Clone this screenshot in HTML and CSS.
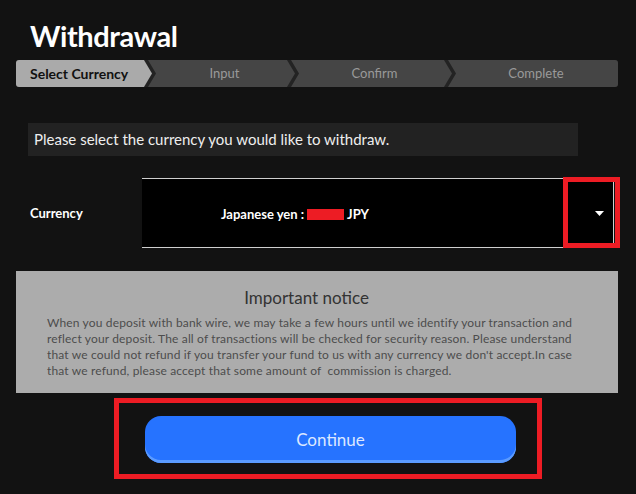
FILE: index.html
```html
<!DOCTYPE html>
<html lang="en">
<head>
  <meta charset="UTF-8">
  <title>Withdrawal</title>
  <link rel="stylesheet" href="styles.css">
</head>
<body>
  <main class="page">
    <h1 class="title">Withdrawal</h1>

    <ol class="steps">
      <li class="step step-active">Select Currency</li>
      <li class="step">Input</li>
      <li class="step">Confirm</li>
      <li class="step step-last">Complete</li>
    </ol>

    <p class="lead">Please select the currency you would like to withdraw.</p>

    <div class="field-row">
      <label class="field-label">Currency</label>
      <div class="select">
        <span class="select-value">Japanese yen : <span class="mask"></span> JPY</span>
        <span class="select-arrow">
          <svg width="9" height="5" viewBox="0 0 9 5"><polygon points="0,0 9,0 4.5,5" fill="#fff"/></svg>
        </span>
        <span class="mark mark-select"></span>
      </div>
    </div>

    <section class="notice">
      <h2 class="notice-title">Important notice</h2>
      <p class="notice-text">When you deposit with bank wire, we may take a few hours until we identify your transaction and<br>reflect your deposit. The all of transactions will be checked for security reason. Please understand<br>that we could not refund if you transfer your fund to us with any currency we don't accept.In case<br>that we refund, please accept that some amount of&nbsp; commission is charged.</p>
    </section>

    <div class="actions">
      <button class="btn-continue">Continue</button>
    </div>
  </main>
</body>
</html>
```

FILE: styles.css
```css
/* Withdrawal - step 1 */
body {
  background-color: #121212;
  color: #fff;
  font-family: "Segoe UI", Lato, sans-serif;
  margin: 0;
  padding: 0;
}

.page {
  width: 602px;
  padding: 0 18px 0 16px;
}

.title {
  margin: 0 0 6px 14px;
  padding-top: 18px;
  font-size: 29px;
  line-height: 36px;
  font-weight: 700;
  letter-spacing: -0.4px;
}

/* steps bar */
.steps {
  display: flex;
  list-style: none;
  margin: 0;
  padding: 0;
  height: 27px;
  background-color: #232323;
  border-radius: 3px;
  overflow: hidden;
}

.step {
  height: 27px;
  line-height: 27px;
  font-size: 13px;
  color: #9a9a9a;
  background-color: #454545;
  text-align: center;
  padding-left: 6px;
  box-sizing: border-box;
  margin-left: -4px;
  clip-path: polygon(0 0, calc(100% - 8px) 0, 100% 50%, calc(100% - 8px) 100%, 0 100%, 8px 50%);
}

.step:nth-child(2) { width: 147px; }
.step:nth-child(3) { width: 161px; }

.step-active {
  width: 136px;
  margin-left: 0;
  padding-left: 14px;
  text-align: left;
  font-size: 14px;
  font-weight: 700;
  color: #111;
  background-color: #aaaaaa;
  clip-path: polygon(0 0, calc(100% - 8px) 0, 100% 50%, calc(100% - 8px) 100%, 0 100%);
}

.step-last {
  flex: 1;
  clip-path: polygon(0 0, 100% 0, 100% 100%, 0 100%, 8px 50%);
}

.lead {
  margin: 36px 0 0 12px;
  width: 550px;
  height: 33px;
  line-height: 33px;
  padding-left: 6px;
  box-sizing: border-box;
  font-size: 15px;
  color: #eee;
  background-color: #222;
}

/* currency select */
.field-row {
  display: flex;
  align-items: center;
  margin-top: 22px;
}

.field-label {
  width: 126px;
  padding-left: 14px;
  box-sizing: border-box;
  font-size: 13px;
  font-weight: 700;
}

.select {
  position: relative;
  display: flex;
  align-items: center;
  width: 472px;
  height: 70px;
  box-sizing: border-box;
  background-color: #000;
  border-top: 1px solid #cfcfcf;
  border-bottom: 1px solid #cfcfcf;
  border-right: 1px solid #cfcfcf;
}

.select-value {
  flex: 1;
  padding-left: 79px;
  padding-top: 2px;
  font-size: 13px;
  font-weight: 700;
}

.mask {
  display: inline-block;
  width: 37px;
  height: 11px;
  background-color: #ed1c24;
  vertical-align: -1px;
}

.select-arrow {
  display: flex;
  width: 18px;
  padding-left: 35px;
  padding-top: 1px;
}

.mark {
  position: absolute;
  border: 5px solid #ed1c24;
  box-sizing: border-box;
}

.mark-select {
  left: 421px;
  top: -2px;
  width: 57px;
  height: 71px;
}

/* notice */
.notice {
  margin-top: 23px;
  height: 122px;
  padding: 17px 38px 0 31px;
  box-sizing: border-box;
  background-color: #acacac;
  color: #444;
}

.notice-title {
  margin: 0 14px 7px 0;
  font-size: 17px;
  line-height: 20px;
  font-weight: 400;
  text-align: center;
  color: #333;
}

.notice-text {
  margin: 0;
  font-size: 12px;
  line-height: 16px;
  letter-spacing: 0.15px;
  white-space: nowrap;
  color: #4d4d4d;
}

/* continue */
.actions {
  margin: 5px 0 0 98px;
  width: 428px;
  box-sizing: border-box;
  border: 5px solid #ed1c24;
  padding: 13px 21px 11px 26px;
}

.btn-continue {
  display: block;
  width: 371px;
  height: 47px;
  border: none;
  border-radius: 16px;
  background-color: #2673ff;
  box-shadow: inset 0 -3px 0 #5b9bff;
  color: #dde8ff;
  font-family: "Segoe UI", Lato, sans-serif;
  font-size: 17px;
  cursor: pointer;
}
```
